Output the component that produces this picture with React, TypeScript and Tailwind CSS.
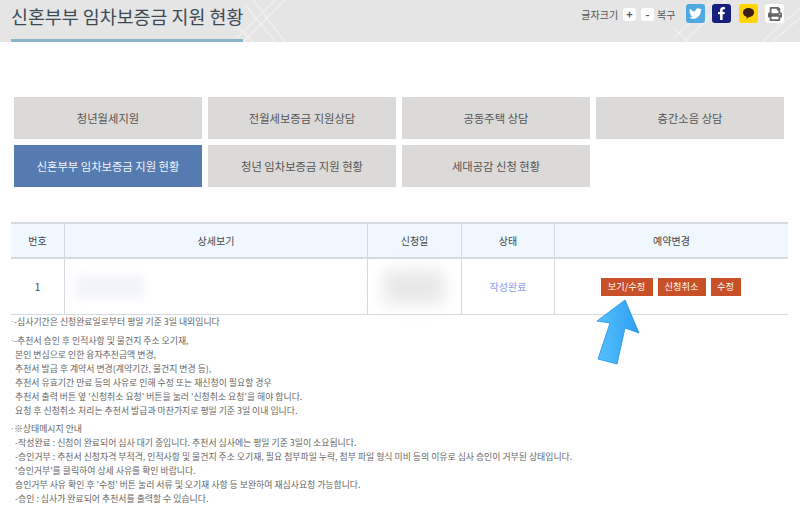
import React from "react";
import { FaTwitter, FaFacebookF, FaPrint } from "react-icons/fa";

const tabs = [
  "청년월세지원",
  "전월세보증금 지원상담",
  "공동주택 상담",
  "층간소음 상담",
  "신혼부부 임차보증금 지원 현황",
  "청년 임차보증금 지원 현황",
  "세대공감 신청 현황",
];

const Note = ({ lines, className }: { lines: string[]; className?: string }) => (
  <div className={className}>
    {lines.map((line, i) => (
      <p key={i} className={i === 0 ? "h-[14px] whitespace-nowrap" : "pl-[4px] h-[14px] whitespace-nowrap"}>
        {i === 0 && <span className="text-[#aaa] -ml-[1px] mr-[-1px]">·</span>}
        {line}
      </p>
    ))}
  </div>
);

const App = () => {
  return (
    <div className="relative w-[800px] h-[518px] overflow-hidden bg-white text-[#555] font-['Noto_Sans_CJK_KR','Noto_Sans',sans-serif]">
      <header className="relative flex justify-between h-[42px] bg-[#e5e5e5] overflow-hidden">
        <svg className="absolute left-[225px] top-0" width="70" height="42" fill="none" stroke="#efefef" strokeWidth="1.5">
          <path d="M8 42 L50 0 M18 42 L60 0 M28 0 L60 42 M20 4 L50 42 M10 24 L28 42" />
        </svg>
        <svg className="absolute left-[672px] top-0" width="128" height="42" fill="none" stroke="#efefef" strokeWidth="1.5">
          <path d="M2 38 L42 0 M12 42 L54 0 M2 28 L16 42 M90 42 L128 8 M100 42 L128 18" />
        </svg>
        <h1 className="relative ml-[11px] w-[232px] h-[42px] border-b-[3px] border-[#8ab4cc] text-[18.4px] leading-[32px] text-[#3c4a56] whitespace-nowrap">
          신혼부부 임차보증금 지원 현황
        </h1>
        <div className="relative flex items-start pt-[4px] pr-[16px]">
          <div className="flex items-center h-[20px] text-[10px] text-[#555]">
            <span className="mr-[5px]">글자크기</span>
            <span className="flex items-center justify-center w-[13px] h-[13px] mr-[5px] rounded-[3px] bg-white text-[11px] font-bold">+</span>
            <span className="flex items-center justify-center w-[13px] h-[13px] mr-[3px] rounded-[3px] bg-white text-[11px] font-bold">-</span>
            <span className="mr-[10px]">복구</span>
          </div>
          <div className="flex gap-[7.5px]">
            <span className="flex items-center justify-center w-[19px] h-[19px] rounded-[3px] bg-[#4fa8e0] text-white text-[13px]">
              <FaTwitter />
            </span>
            <span className="flex items-center justify-center w-[19px] h-[19px] rounded-[3px] bg-[#16207c] text-white text-[13px]">
              <FaFacebookF />
            </span>
            <span className="flex items-center justify-center w-[19px] h-[19px] rounded-[3px] bg-[#ffd400]">
              <svg width="13" height="13" viewBox="0 0 14 14">
                <ellipse cx="7" cy="6" rx="6" ry="5" fill="#3c1e1e" />
                <path d="M5 10 L5 13 L8 10 Z" fill="#3c1e1e" />
              </svg>
            </span>
            <span className="flex items-center justify-center w-[19px] h-[19px] rounded-[3px] bg-white text-[#666] text-[14px]">
              <FaPrint />
            </span>
          </div>
        </div>
      </header>

      <div className="grid grid-cols-[188px_188px_188px_188px] gap-[6px] ml-[14px] mt-[55px]">
        {tabs.map((t, i) => (
          <div
            key={t}
            className={
              i === 4
                ? "flex items-center justify-center h-[42px] bg-[#557bb0] text-[#f2f5fa] text-[11.3px]"
                : "flex items-center justify-center h-[42px] bg-[#dcdad8] text-[#555] text-[11.3px]"
            }
          >
            {t}
          </div>
        ))}
      </div>

      <div className="ml-[11px] mt-[35px] w-[777px] border-t-2 border-[#d5d9e0]">
        <div className="grid grid-cols-[54px_303px_94px_93px_233px] h-[35px] bg-[#f0f7ff] border-b-2 border-[#d5d9e0] text-[10px] text-[#444]">
          <div className="flex items-center justify-center border-r border-[#d5d9e0]">번호</div>
          <div className="flex items-center justify-center border-r border-[#d5d9e0]">상세보기</div>
          <div className="flex items-center justify-center border-r border-[#d5d9e0]">신청일</div>
          <div className="flex items-center justify-center border-r border-[#d5d9e0]">상태</div>
          <div className="flex items-center justify-center">예약변경</div>
        </div>
        <div className="grid grid-cols-[54px_303px_94px_93px_233px] h-[56px] border-b border-[#d5d9e0] text-[10px]">
          <div className="flex items-center justify-center border-r border-[#d5d9e0] text-[11px]">1</div>
          <div className="flex items-center pl-[11px] border-r border-[#d5d9e0]">
            <div className="w-[68px] h-[22px] bg-[#f2f3fb] blur-[4px]" />
          </div>
          <div className="flex items-center pl-[16px] border-r border-[#d5d9e0]">
            <div className="w-[60px] h-[34px] bg-[#e8e8e8] blur-[8px]" />
          </div>
          <div className="flex items-center justify-center border-r border-[#d5d9e0] text-[#8a9ef0]">작성완료</div>
          <div className="flex items-center justify-center gap-[5px] pr-[2px] text-[9.2px] text-white">
            <span className="flex items-center justify-center w-[52px] h-[18px] bg-[#c85028]">보기/수정</span>
            <span className="flex items-center justify-center w-[48px] h-[18px] bg-[#c85028]">신청취소</span>
            <span className="flex items-center justify-center w-[30px] h-[18px] bg-[#c85028]">수정</span>
          </div>
        </div>
      </div>

      <div className="ml-[11px] text-[8.9px] leading-[14px] text-[#666]">
        <Note className="mt-[0px]" lines={["-심사기간은 신청완료일로부터 평일 기준 3일 내외입니다"]} />
        <Note
          className="mt-[5px]"
          lines={[
            "-추천서 승인 후 인적사항 및 물건지 주소 오기재,",
            "본인 변심으로 인한 융자추천금액 변경,",
            "추천서 발급 후 계약서 변경(계약기간, 물건지 변경 등),",
            "추천서 유효기간 만료 등의 사유로 인해 수정 또는 재신청이 필요할 경우",
            "추천서 출력 버튼 옆 '신청취소 요청' 버튼을 눌러 '신청취소 요청'을 해야 합니다.",
            "요청 후 신청취소 처리는 추천서 발급과 마찬가지로 평일 기준 3일 이내 입니다.",
          ]}
        />
        <Note
          className="mt-[4px]"
          lines={[
            "※상태메시지 안내",
            "-작성완료 : 신청이 완료되어 심사 대기 중입니다. 추천서 심사에는 평일 기준 3일이 소요됩니다.",
            "-승인거부 : 추천서 신청자격 부적격, 인적사항 및 물건지 주소 오기재, 필요 첨부파일 누락, 첨부 파일 형식 미비 등의 이유로 심사 승인이 거부된 상태입니다.",
            "'승인거부'를 클릭하여 상세 사유를 확인 바랍니다.",
            "승인거부 사유 확인 후 '수정' 버튼 눌러 서류 및 오기재 사항 등 보완하여 재심사요청 가능합니다.",
            "-승인 : 심사가 완료되어 추천서를 출력할 수 있습니다.",
          ]}
        />
      </div>

      <svg className="absolute left-[590px] top-[295px]" width="56" height="75" viewBox="0 0 56 75">
        <defs>
          <linearGradient id="arrow" x1="0" y1="0" x2="1" y2="0">
            <stop offset="0" stopColor="#55c1ff" />
            <stop offset="1" stopColor="#2f9ff0" />
          </linearGradient>
        </defs>
        <path d="M35 5 L49 38 L35 33 L27 69 L8 64 L20 28 L7 26 Z" fill="url(#arrow)" stroke="#1e8fe8" strokeWidth="0.8" strokeLinejoin="round" />
      </svg>
    </div>
  );
};

export default App;
